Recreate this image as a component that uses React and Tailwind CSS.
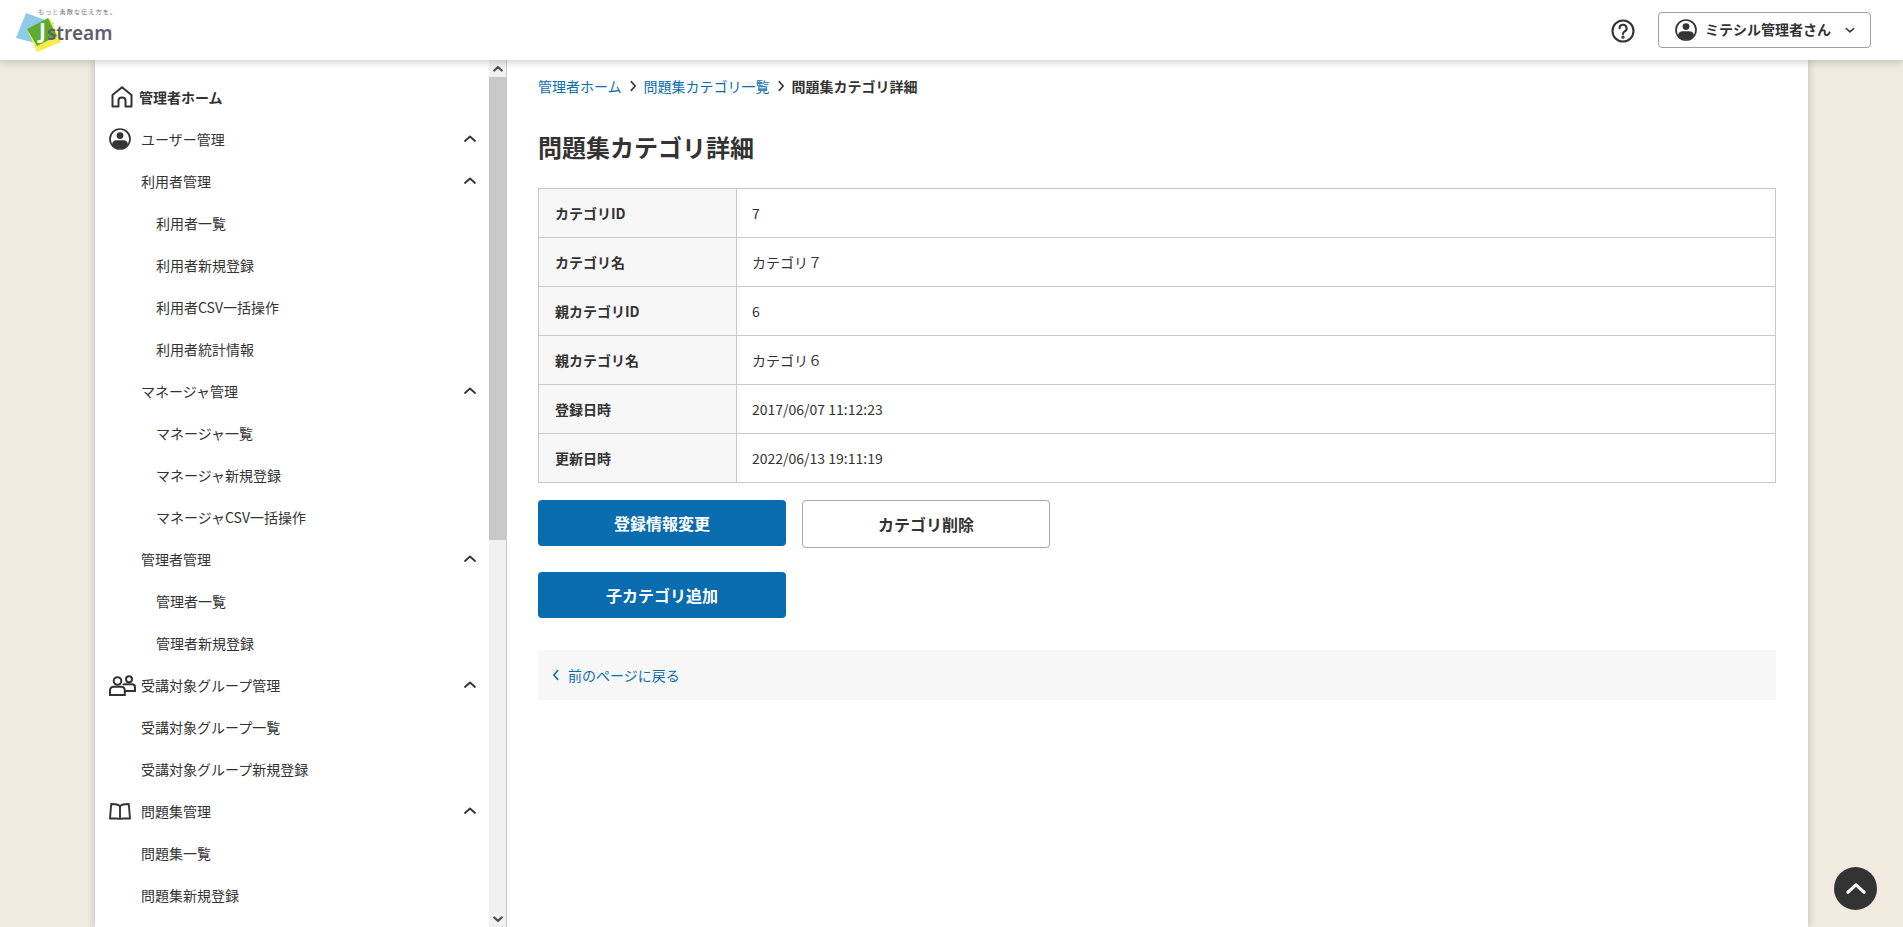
import React from "react";

const Chevron = ({ d = "up", className = "" }) => {
  const paths = {
    up: "M3 10 L8 5.5 L13 10",
    down: "M3 6 L8 10.5 L13 6",
    left: "M10 3 L5.5 8 L10 13",
    right: "M6 3 L10.5 8 L6 13",
  };
  return (
    <svg viewBox="0 0 16 16" fill="none" stroke="currentColor" strokeLinecap="round" strokeLinejoin="round" className={className}>
      <path d={paths[d]} />
    </svg>
  );
};

const UserIcon = ({ className = "" }) => (
  <svg viewBox="0 0 22 22" className={className}>
    <defs>
      <clipPath id="uc"><circle cx="11" cy="11" r="9.6" /></clipPath>
    </defs>
    <circle cx="11" cy="11" r="10" fill="none" stroke="#333" strokeWidth="1.7" />
    <circle cx="11" cy="7.6" r="3.4" fill="#333" />
    <path d="M3 22 V17 Q3 12.3 8 12.3 H14 Q19 12.3 19 17 V22 Z" fill="#333" clipPath="url(#uc)" />
  </svg>
);

const HomeIcon = ({ className = "" }) => (
  <svg viewBox="0 0 22 22" fill="none" stroke="#333" strokeWidth="2" strokeLinejoin="round" className={className}>
    <path d="M1.5 20.5 V9 L11 1.3 L20.5 9 V20.5 H14.5 V14.5 Q14.5 11.6 11 11.6 Q7.5 11.6 7.5 14.5 V20.5 Z" />
  </svg>
);

const GroupIcon = ({ className = "" }) => (
  <svg viewBox="0 0 27 21" fill="none" stroke="#333" strokeWidth="2" className={className}>
    <circle cx="8.5" cy="6" r="3.8" />
    <circle cx="20" cy="4.3" r="3" />
    <path d="M1 20 V15.5 Q1 11.8 5 11.8 H12 Q15.8 11.8 15.8 15.5 V20 Z" />
    <path d="M14 10 Q14.5 9.3 16 9.3 H23 Q26 9.3 26 12.5 V16 H16" />
  </svg>
);

const BookIcon = ({ className = "" }) => (
  <svg viewBox="0 0 22 17" fill="none" stroke="#333" strokeWidth="1.9" strokeLinejoin="round" className={className}>
    <path d="M11 3.2 Q8.5 1 3 1 H2.2 L1 15.5 H7 Q10 15.5 11 16 Q12 15.5 15 15.5 H21 L19.8 1 H19 Q13.5 1 11 3.2 Z" />
    <path d="M11 3.2 V16" />
  </svg>
);

const HelpIcon = ({ className = "" }) => (
  <svg viewBox="0 0 24 24" fill="none" stroke="#333" strokeWidth="2.1" strokeLinecap="round" className={className}>
    <circle cx="12" cy="12" r="10.5" />
    <path d="M8.6 9.3 a3.5 3.5 0 1 1 5.2 3 q-1.8 1 -1.8 2.7" />
    <circle cx="12" cy="18.2" r="0.6" fill="#333" />
  </svg>
);

const Logo = () => (
  <svg viewBox="0 0 120 60" className="w-[120px] h-[60px] shrink-0">
    <polygon points="26,13 54,23 43,45 16,38" fill="#8ecbea" />
    <polygon points="50,18 61,42 37,52 27,29" fill="#f7ec4b" />
    <polygon points="27,29 48,18 57,36 37,46" fill="#5dab2f" />
    <text x="38" y="13.5" fontSize="6.2" letterSpacing="1" fill="#777" fontFamily="'Noto Sans CJK JP', sans-serif">もっと素敵な伝え方を。</text>
    <text x="39" y="38" fontSize="21" fontWeight="700" fill="#ffffff" fontFamily="'Noto Sans', sans-serif">J</text>
    <text x="47" y="40" fontSize="19" fontWeight="600" fill="#5c5e6c" fontFamily="'Noto Sans', sans-serif">stream</text>
  </svg>
);

const NavRow = ({ icon, label, indent = 0, chevron, bold }) => (
  <a className="flex items-center h-[42px] text-[14px] text-[#333] shrink-0">
    {icon ? (
      <span className="w-[32px] ml-[14px] flex items-center shrink-0">{icon}</span>
    ) : (
      <span className={indent === 2 ? "w-[61px] shrink-0" : "w-[46px] shrink-0"} />
    )}
    <span className={bold ? "font-bold -ml-[2px]" : ""}>{label}</span>
    {chevron && <Chevron d="up" className="w-[16px] h-[16px] ml-auto mr-[11px] stroke-[1.8] text-[#333]" />}
  </a>
);

const Sidebar = () => (
  <aside className="w-[412px] shrink-0 flex border-r border-[#c8c8c8]">
    <nav className="flex-1 min-w-0 flex flex-col pt-[16px] overflow-hidden">
      <NavRow icon={<HomeIcon className="w-[22px] h-[22px] ml-[2px]" />} label="管理者ホーム" bold />
      <NavRow icon={<UserIcon className="w-[22px] h-[22px]" />} label="ユーザー管理" chevron />
      <NavRow label="利用者管理" chevron />
      <NavRow label="利用者一覧" indent={2} />
      <NavRow label="利用者新規登録" indent={2} />
      <NavRow label="利用者CSV一括操作" indent={2} />
      <NavRow label="利用者統計情報" indent={2} />
      <NavRow label="マネージャ管理" chevron />
      <NavRow label="マネージャ一覧" indent={2} />
      <NavRow label="マネージャ新規登録" indent={2} />
      <NavRow label="マネージャCSV一括操作" indent={2} />
      <NavRow label="管理者管理" chevron />
      <NavRow label="管理者一覧" indent={2} />
      <NavRow label="管理者新規登録" indent={2} />
      <NavRow icon={<GroupIcon className="w-[27px] h-[21px]" />} label="受講対象グループ管理" chevron />
      <NavRow label="受講対象グループ一覧" />
      <NavRow label="受講対象グループ新規登録" />
      <NavRow icon={<BookIcon className="w-[22px] h-[17px]" />} label="問題集管理" chevron />
      <NavRow label="問題集一覧" />
      <NavRow label="問題集新規登録" />
    </nav>
    <div className="w-[17px] shrink-0 flex flex-col bg-[#f1f1f1]">
      <div className="h-[17px] shrink-0 flex items-center justify-center">
        <Chevron d="up" className="w-[12px] h-[12px] stroke-[3] text-[#505050]" />
      </div>
      <div className="flex-1 min-h-0">
        <div className="h-[463px] bg-[#c8c8c8]" />
      </div>
      <div className="h-[17px] shrink-0 flex items-center justify-center">
        <Chevron d="down" className="w-[12px] h-[12px] stroke-[3] text-[#505050]" />
      </div>
    </div>
  </aside>
);

const rows = [
  ["カテゴリID", "7"],
  ["カテゴリ名", "カテゴリ７"],
  ["親カテゴリID", "6"],
  ["親カテゴリ名", "カテゴリ６"],
  ["登録日時", "2017/06/07 11:12:23"],
  ["更新日時", "2022/06/13 19:11:19"],
];

const Main = () => (
  <main className="flex-1 min-w-0 pl-[31px] pr-[32px] text-[#333] overflow-hidden">
    <ol className="mt-[16px] h-[20px] flex items-center text-[14px]">
      <li className="text-[#0b6db0]">管理者ホーム</li>
      <Chevron d="right" className="w-[14px] h-[14px] mx-[4px] stroke-[1.8] text-[#333]" />
      <li className="text-[#0b6db0]">問題集カテゴリ一覧</li>
      <Chevron d="right" className="w-[14px] h-[14px] mx-[4px] stroke-[1.8] text-[#333]" />
      <li className="font-bold">問題集カテゴリ詳細</li>
    </ol>
    <h1 className="mt-[33px] h-[36px] leading-[36px] text-[24px] font-bold">問題集カテゴリ詳細</h1>
    <table className="mt-[23px] w-full border-collapse text-[14px]">
      <tbody>
        {rows.map(([k, v]) => (
          <tr key={k} className="h-[49px]">
            <th className="w-[198px] bg-[#f7f7f7] border border-[#c8c8c8] pl-[16px] text-left font-bold p-0">{k}</th>
            <td className="border border-[#c8c8c8] pl-[15px] p-0">{v}</td>
          </tr>
        ))}
      </tbody>
    </table>
    <div className="mt-[17px] flex items-start gap-[16px]">
      <button className="w-[248px] h-[46px] rounded-[4px] bg-[#096cae] text-white text-[16px] font-bold">登録情報変更</button>
      <button className="w-[248px] h-[48px] rounded-[4px] bg-white border border-[#a8a8a8] text-[#333] text-[16px] font-bold">カテゴリ削除</button>
    </div>
    <div className="mt-[24px]">
      <button className="block w-[248px] h-[46px] rounded-[4px] bg-[#096cae] text-white text-[16px] font-bold">子カテゴリ追加</button>
    </div>
    <div className="mt-[32px] h-[50px] bg-[#f7f7f7] flex items-center pl-[11px] text-[14px] text-[#0b6db0]">
      <Chevron d="left" className="w-[14px] h-[14px] stroke-[1.8]" />
      <span className="ml-[5px]">前のページに戻る</span>
    </div>
  </main>
);

export default function App() {
  return (
    <div className="h-[927px] flex flex-col bg-[#f1eadf] overflow-hidden font-['Noto_Sans_CJK_JP',sans-serif]">
      <header className="relative z-10 h-[60px] shrink-0 bg-white shadow-[0_2px_8px_rgba(0,0,0,0.2)] flex items-center pr-[32px]">
        <Logo />
        <div className="ml-auto flex items-center">
          <HelpIcon className="w-[24px] h-[24px] mr-[23px] mt-[1px]" />
          <div className="w-[213px] h-[36px] border border-[#a0a0a0] rounded-[4px] bg-white flex items-center pl-[16px]">
            <UserIcon className="w-[22px] h-[22px] shrink-0" />
            <span className="ml-[8px] mb-[2px] text-[14px] font-bold text-[#333] whitespace-nowrap">ミテシル管理者さん</span>
            <Chevron d="down" className="w-[12px] h-[12px] ml-[13px] stroke-[2] text-[#333]" />
          </div>
        </div>
      </header>
      <div className="flex-1 min-h-0 w-[1713px] ml-[95px] bg-white flex shadow-[0_0_8px_rgba(0,0,0,0.22)]">
        <Sidebar />
        <Main />
      </div>
      <button className="fixed right-[26px] top-[867px] w-[43px] h-[43px] rounded-full bg-[#333] flex items-center justify-center text-white">
        <Chevron d="up" className="w-[26px] h-[26px] stroke-[1.9]" />
      </button>
    </div>
  );
}
